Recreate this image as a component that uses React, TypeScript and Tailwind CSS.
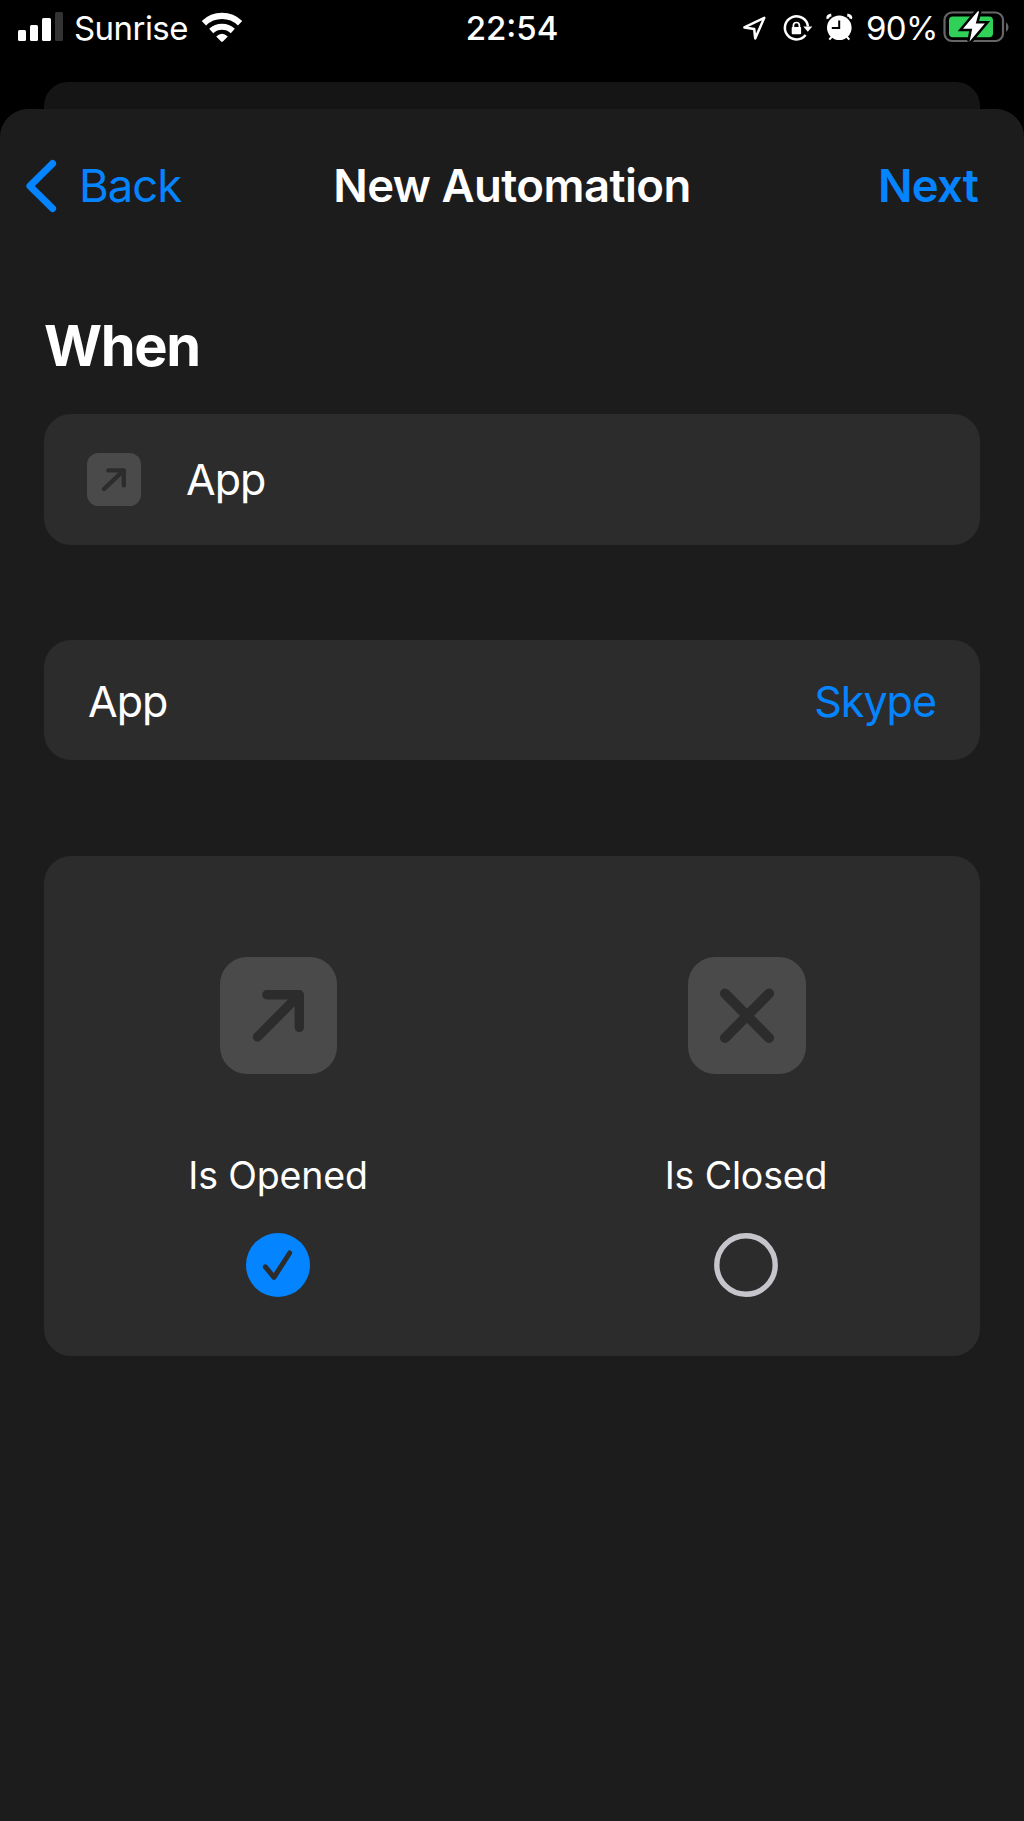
const BLUE = "text-[#0584ff]";

function StatusBar() {
  return (
    <header className="flex h-14 shrink-0 items-center text-[33px] leading-none text-white">
      <div className="flex w-[465px] items-center pl-[18px]">
        <svg width="46" height="56" viewBox="18 0 46 56" fill="#fff">
          <rect x="18" y="30" width="8" height="11" rx="1.5" />
          <rect x="30" y="25" width="8" height="16" rx="1.5" />
          <rect x="42" y="18" width="9" height="23" rx="1.5" />
          <rect x="55" y="12" width="8" height="29" rx="1.5" fill="#333" />
        </svg>
        <span className="ml-[10px] w-[125px] tracking-[-0.55px] whitespace-nowrap">Sunrise</span>
        <svg width="46" height="56" viewBox="199 0 46 56" fill="none" stroke="#fff">
          <path d="M203.9 23.2A26 26 0 0 1 240.1 23.2" strokeWidth="6.2" />
          <path d="M211.2 31A16 16 0 0 1 232.8 31" strokeWidth="6" />
          <path d="M216.2 36.4Q222 31 227.8 36.4L222.9 41.4Q222 42.2 221.1 41.4Z" fill="#fff" stroke="none" />
        </svg>
      </div>
      <div className="w-[94px] text-center font-medium whitespace-nowrap">22:54</div>
      <div className="flex w-[465px] items-center justify-end pr-[14px]">
        <svg width="112" height="56" viewBox="741 0 112 56" fill="none" stroke="#fff">
          <path d="M764.3 17.8L744.4 27.4L754.2 29L755.2 38.4Z" strokeWidth="2.5" strokeLinejoin="round" />
          <path d="M805.6 35A11.6 11.6 0 1 1 808 26.5" strokeWidth="2.5" />
          <path d="M803.3 26.5H812.3L807.8 31.8Z" fill="#fff" stroke="none" />
          <rect x="791.7" y="27" width="9.4" height="7.2" rx="1" fill="#fff" stroke="none" />
          <path d="M793.4 28V25.5a3 3 0 0 1 6 0V28" strokeWidth="1.7" />
          <circle cx="839.3" cy="27.8" r="12.3" fill="#fff" stroke="none" />
          <path d="M832 36.5L829.3 39.6M846.6 36.5L849.3 39.6" strokeWidth="2" />
          <path d="M828 18.8Q827 15.6 831.3 15M850.6 18.8Q851.6 15.6 847.3 15" strokeWidth="3" />
          <path d="M839.2 20.5V28H831.8" stroke="#000" strokeWidth="2" />
        </svg>
        <span className="ml-[13px] w-[77px] tracking-[-0.6px] whitespace-nowrap">90%</span>
        <svg width="67" height="56" viewBox="943 0 67 56">
          <rect x="944.5" y="12.5" width="58.5" height="28.5" rx="7.5" fill="none" stroke="#666" strokeWidth="2.2" />
          <path d="M1006 22.2Q1008.6 24 1008.6 27T1006 31.8Z" fill="#666" />
          <rect x="949" y="16.5" width="44" height="20.7" rx="4" fill="#30d158" />
          <path
            d="M977.6 11.4L963 28.8H972.2L969.6 41.6L984.8 23.6H975.8L978.9 12Q978.9 10.6 977.6 11.4Z"
            fill="#fff"
            stroke="#000"
            strokeWidth="5"
            paintOrder="stroke"
          />
        </svg>
      </div>
    </header>
  );
}

function NavBar() {
  return (
    <nav className="flex h-[153px] items-center pr-[45px] pl-[25px] text-[45.5px] leading-none">
      <button className={`flex w-[287px] items-center ${BLUE}`}>
        <svg width="32" height="54" viewBox="0 0 32 54" fill="none" stroke="currentColor">
          <path d="M27.6 4.5L4.9 27L27.6 49.5" strokeWidth="7" strokeLinecap="round" strokeLinejoin="round" />
        </svg>
        <span className="ml-[22px] tracking-[-1px] whitespace-nowrap">Back</span>
      </button>
      <h1 className="flex-1 text-center font-semibold tracking-[-0.55px] whitespace-nowrap text-white">New Automation</h1>
      <button className={`w-[267px] pr-px text-right font-semibold tracking-[-0.8px] ${BLUE}`}>Next</button>
    </nav>
  );
}

function ArrowTile({ small = false }: { small?: boolean }) {
  return small ? (
    <svg width="54" height="53" viewBox="0 0 54 53" fill="none">
      <rect width="54" height="53" rx="11.5" fill="#4a4a4a" />
      <path d="M17 36L36.8 17.4M21.4 17.4H36.8V32.2" stroke="#2c2c2c" strokeWidth="4.4" strokeLinecap="round" strokeLinejoin="round" />
    </svg>
  ) : (
    <svg width="117" height="117" viewBox="0 0 117 117" fill="none">
      <rect width="117" height="117" rx="27" fill="#4a4a4a" />
      <path d="M37.5 80L79.3 37.8M46.8 37.8H79.3V70.5" stroke="#2c2c2c" strokeWidth="9.4" strokeLinecap="round" strokeLinejoin="round" />
      <path d="M68 42H75V50Z" fill="#2c2c2c" />
    </svg>
  );
}

function CloseTile() {
  return (
    <svg className="ml-0.5" width="118" height="117" viewBox="0 0 118 117" fill="none">
      <rect width="118" height="117" rx="27" fill="#4a4a4a" />
      <path d="M37 36.5L81 81M81 36.5L37 81" stroke="#2c2c2c" strokeWidth="10" strokeLinecap="round" />
    </svg>
  );
}

function Radio({ checked }: { checked: boolean }) {
  return (
    <svg width="64" height="64" viewBox="0 0 64 64" fill="none">
      {checked ? (
        <>
          <circle cx="32" cy="32" r="32" fill="#0584ff" />
          <path d="M19.4 33.8L28 44.3L43.7 20" stroke="#2c2c2c" strokeWidth="5" strokeLinecap="round" strokeLinejoin="round" />
        </>
      ) : (
        <circle cx="32" cy="32" r="29.2" stroke="#c6c5cb" strokeWidth="5.4" />
      )}
    </svg>
  );
}

export default function App() {
  return (
    <div className="flex h-[1821px] w-[1024px] flex-col overflow-hidden bg-black font-['Inter',sans-serif]">
      <StatusBar />
      <div className="mx-11 mt-[26px] h-[27px] shrink-0 rounded-t-[24px] bg-[#151515]" />
      <main className="flex-1 rounded-t-[28px] bg-[#1c1c1c]">
        <NavBar />
        <div className="px-11 text-[43px] leading-none text-white">
          <h2 className="mt-[53px] h-[62px] text-[56px] leading-[62px] font-bold tracking-[-1.4px]">When</h2>
          <section className="mt-[37px] flex h-[131px] items-center rounded-[27px] bg-[#2c2c2c] pl-[43px]">
            <ArrowTile small />
            <span className="ml-[45px] tracking-[-1px]">App</span>
          </section>
          <section className="mt-[95px] flex h-[120px] items-center justify-between rounded-[27px] bg-[#2c2c2c] px-[44px] pt-0.5">
            <span className="tracking-[-1px]">App</span>
            <span className={`tracking-[-1px] ${BLUE}`}>Skype</span>
          </section>
          <section className="mt-24 grid h-[500px] grid-cols-2 rounded-[27px] bg-[#2c2c2c] pt-[101px] text-[37.5px]">
            <div className="flex flex-col items-center">
              <ArrowTile />
              <span className="mt-[83px] h-[38px] leading-[38px] tracking-[-0.15px]">Is Opened</span>
              <div className="mt-[38px]">
                <Radio checked />
              </div>
            </div>
            <div className="flex flex-col items-center">
              <CloseTile />
              <span className="mt-[83px] h-[38px] leading-[38px] tracking-[-0.15px]">Is Closed</span>
              <div className="mt-[38px]">
                <Radio checked={false} />
              </div>
            </div>
          </section>
        </div>
      </main>
    </div>
  );
}
